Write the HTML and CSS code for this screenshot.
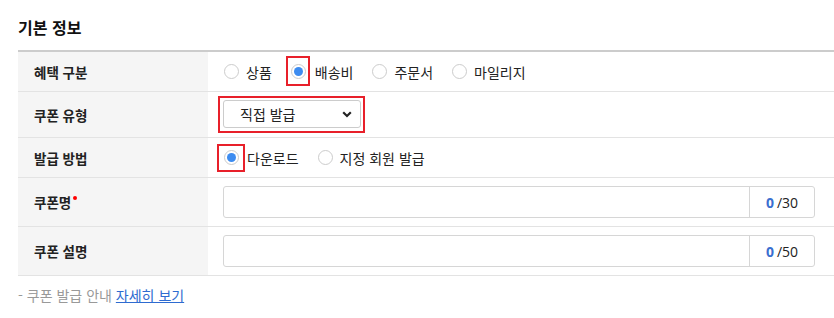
FILE: index.html
```html
<!DOCTYPE html>
<html lang="ko">
<head>
  <meta charset="UTF-8">
  <meta name="viewport" content="width=device-width, initial-scale=1.0">
  <title>기본 정보</title>
  <link rel="stylesheet" href="styles.css">
</head>
<body>
  <div class="section">
    <h2 class="title">기본 정보</h2>
    <div class="form-table">
      <div class="row row-sm">
        <div class="label">혜택 구분</div>
        <div class="value">
          <label class="radio"><span class="dot"></span>상품</label>
          <label class="radio"><span class="mark mark-a"><span class="dot checked"></span></span>배송비</label>
          <label class="radio"><span class="dot"></span>주문서</label>
          <label class="radio"><span class="dot"></span>마일리지</label>
        </div>
      </div>
      <div class="row row-md">
        <div class="label">쿠폰 유형</div>
        <div class="value">
          <div class="mark-box">
            <div class="select">
              <span>직접 발급</span>
              <svg class="chevron" width="10" height="7" viewBox="0 0 10 7"><path d="M1.2 1.3 L5 5 L8.8 1.3" fill="none" stroke="#222" stroke-width="2.2"/></svg>
            </div>
          </div>
        </div>
      </div>
      <div class="row row-sm">
        <div class="label">발급 방법</div>
        <div class="value">
          <label class="radio"><span class="mark mark-b"><span class="dot checked"></span></span>다운로드</label>
          <label class="radio"><span class="dot"></span>지정 회원 발급</label>
        </div>
      </div>
      <div class="row row-lg">
        <div class="label">쿠폰명<span class="req"></span></div>
        <div class="value">
          <div class="text-input">
            <div class="field"></div>
            <div class="counter"><em>0</em> /30</div>
          </div>
        </div>
      </div>
      <div class="row row-lg">
        <div class="label">쿠폰 설명</div>
        <div class="value">
          <div class="text-input">
            <div class="field"></div>
            <div class="counter"><em>0</em> /50</div>
          </div>
        </div>
      </div>
    </div>
    <p class="guide">- 쿠폰 발급 안내 <a href="#">자세히 보기</a></p>
  </div>
</body>
</html>
```

FILE: styles.css
```css
body {
  margin: 0;
  font-family: "Noto Sans CJK KR", "Noto Sans", sans-serif;
  color: #222;
  background: #fff;
}

.section {
  padding-left: 18px;
}

.title {
  margin: 0;
  padding: 17px 0 13px;
  font-size: 16px;
  line-height: 20px;
  font-weight: bold;
  color: #111;
}

.form-table {
  border-top: 2px solid #ccc;
}

.row {
  display: flex;
  border-bottom: 1px solid #e3e3e3;
}

.row-sm { height: 39px; }
.row-md { height: 45px; }
.row-lg { height: 48px; }

.label {
  width: 174px;
  flex-shrink: 0;
  padding-left: 16px;
  background: #f5f5f5;
  display: flex;
  align-items: center;
  font-size: 13.5px;
  font-weight: bold;
  color: #222;
}

.req {
  width: 4px;
  height: 4px;
  border-radius: 50%;
  background: #f00;
  margin: -9px 0 0 2px;
}

.value {
  flex: 1;
  display: flex;
  align-items: center;
  padding: 0 19px 0 15px;
  font-size: 14px;
  color: #222;
}

.radio {
  display: flex;
  align-items: center;
  margin-right: 18px;
}

.dot {
  width: 13px;
  height: 13px;
  border: 1px solid #ccc;
  border-radius: 50%;
  margin: 0 7px 0 1px;
  position: relative;
  background: #fff;
}

.dot.checked::after {
  content: "";
  position: absolute;
  left: 2px;
  top: 2px;
  width: 9px;
  height: 9px;
  border-radius: 50%;
  background: #3d8cf0;
}

.mark {
  display: flex;
  outline: 2px solid #e8202a;
}

.mark .dot {
  margin: 0;
}

.mark-a {
  padding: 6px 2px 5px 3px;
  margin: -6px 7px -5px -2px;
}

.mark-b {
  padding: 4px 4px 5px 5px;
  margin: -4px 4px -5px -4px;
}

.mark-box {
  border: 2px solid #e8202a;
  padding: 2px 2px 3px 3px;
  margin-left: -5px;
}

.select {
  width: 112px;
  height: 26px;
  border: 1px solid #ccc;
  border-radius: 3px;
  padding: 0 8px 0 16px;
  display: flex;
  align-items: center;
  justify-content: space-between;
  color: #222;
  font-size: 14px;
}

.text-input {
  flex: 1;
  height: 30px;
  display: flex;
  border: 1px solid #d6d6d6;
  border-radius: 3px;
}

.field {
  flex: 1;
}

.counter {
  width: 64px;
  border-left: 1px solid #d6d6d6;
  display: flex;
  align-items: center;
  justify-content: center;
  font-family: "Open Sans", "Noto Sans", sans-serif;
  font-size: 14px;
  color: #222;
}

.counter em {
  font-style: normal;
  font-weight: bold;
  color: #3a6fd0;
  margin-right: 3px;
}

.guide {
  margin: 9px 0 0;
  font-size: 14px;
  line-height: 20px;
  color: #999;
}

.guide a {
  color: #2e6bd0;
}
```
